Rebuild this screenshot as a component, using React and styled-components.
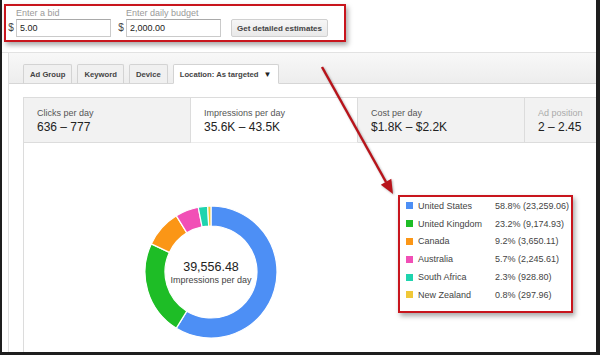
import React from 'react'
import styled, { createGlobalStyle } from 'styled-components'

const GlobalStyle = createGlobalStyle`
	html, body {
		margin: 0;
		padding: 0;
		background: #fff;
	}
	body {
		font-family: "Liberation Sans", Arial, sans-serif;
	}
	* {
		box-sizing: border-box;
	}
`

const slices = [
	{ name: 'United States', pct: 58.8, value: '23,259.06', color: '#4d8ff5' },
	{ name: 'United Kingdom', pct: 23.2, value: '9,174.93', color: '#1ebd26' },
	{ name: 'Canada', pct: 9.2, value: '3,650.11', color: '#fb9616' },
	{ name: 'Australia', pct: 5.7, value: '2,245.61', color: '#f14fb6' },
	{ name: 'South Africa', pct: 2.3, value: '928.80', color: '#1fd4ae' },
	{ name: 'New Zealand', pct: 0.8, value: '297.96', color: '#f0c838' },
]

const metrics = [
	{ label: 'Clicks per day', value: '636 – 777' },
	{ label: 'Impressions per day', value: '35.6K – 43.5K', active: true },
	{ label: 'Cost per day', value: '$1.8K – $2.2K' },
	{ label: 'Ad position', value: '2 – 2.45', muted: true },
]

const tabs = ['Ad Group', 'Keyword', 'Device']

// ring segment between two angles (degrees, 0 = top, clockwise)
const arc = (cx, cy, r1, r2, a0, a1) => {
	const pt = (r, a) => {
		const rad = ((a - 90) * Math.PI) / 180
		return [cx + r * Math.cos(rad), cy + r * Math.sin(rad)]
	}
	const large = a1 - a0 > 180 ? 1 : 0
	const [x0, y0] = pt(r2, a0)
	const [x1, y1] = pt(r2, a1)
	const [x2, y2] = pt(r1, a1)
	const [x3, y3] = pt(r1, a0)
	return `M${x0} ${y0} A${r2} ${r2} 0 ${large} 1 ${x1} ${y1} L${x2} ${y2} A${r1} ${r1} 0 ${large} 0 ${x3} ${y3} Z`
}

const Donut = () => {
	let start = 0
	return (
		<DonutSvg width='134' height='134' viewBox='0 0 134 134'>
			{slices.map((s) => {
				const end = start + (s.pct / 100) * 360
				const d = arc(67, 67, 46, 66, start, end)
				start = end
				return <path key={s.name} d={d} fill={s.color} stroke='#fff' strokeWidth='1.2' />
			})}
			<text x='67' y='63' textAnchor='middle' dominantBaseline='middle' fontSize='12.5' fill='#222'>
				39,556.48
			</text>
			<text x='67' y='76' textAnchor='middle' dominantBaseline='middle' fontSize='9' fill='#444'>
				Impressions per day
			</text>
		</DonutSvg>
	)
}

const App = () => {
	return (
		<>
			<GlobalStyle />
			<Frame>
				<TopBar>
					<Callout>
						<Group>
							<Dollar>$</Dollar>
							<Field>
								<FieldLabel>Enter a bid</FieldLabel>
								<Input readOnly value='5.00' />
							</Field>
						</Group>
						<Group $gap>
							<Dollar>$</Dollar>
							<Field>
								<FieldLabel>Enter daily budget</FieldLabel>
								<Input readOnly value='2,000.00' />
							</Field>
						</Group>
						<EstimateButton>Get detailed estimates</EstimateButton>
					</Callout>
				</TopBar>
				<Panel>
					<TabStrip>
						{tabs.map((t) => (
							<Tab key={t}>{t}</Tab>
						))}
						<Tab $active>
							Location: As targeted <Caret>▼</Caret>
						</Tab>
					</TabStrip>
					<Inner>
						<Cards>
							{metrics.map((m) => (
								<Card key={m.label} $active={m.active}>
									<CardLabel $muted={m.muted}>{m.label}</CardLabel>
									<CardValue>{m.value}</CardValue>
								</Card>
							))}
						</Cards>
						<ChartRow>
							<Donut />
							<Legend>
								{slices.map((s) => (
									<LegendRow key={s.name}>
										<Swatch $color={s.color} />
										<LegendName>{s.name}</LegendName>
										<span>
											{s.pct.toFixed(1)}% ({s.value})
										</span>
									</LegendRow>
								))}
							</Legend>
						</ChartRow>
					</Inner>
				</Panel>
				<Arrow width='600' height='355' viewBox='0 0 600 355'>
					<line x1='322' y1='67' x2='386' y2='182' stroke='#b8141b' strokeWidth='2.5' />
					<polygon points='393,194 380.8,184.7 391.3,178.8' fill='#b8141b' />
				</Arrow>
			</Frame>
		</>
	)
}

export default App

const Frame = styled.div`
	position: relative;
	width: 600px;
	height: 355px;
	display: flex;
	flex-direction: column;
	overflow: hidden;
	background: #fff;
	border-left: 2px solid #1e1e1e;
	border-right: 4px solid #1e1e1e;
	border-bottom: 3px solid #1e1e1e;
`

const TopBar = styled.div`
	height: 53px;
	flex-shrink: 0;
	border-bottom: 1px solid #e2e2e2;
`

const Callout = styled.div`
	margin: 4px 0 0 2px;
	width: 342px;
	height: 38px;
	display: flex;
	align-items: flex-end;
	padding-bottom: 3px;
	border: 2px solid #c8151d;
	box-shadow: 2px 3px 5px rgba(0, 0, 0, 0.35);
`

const Group = styled.div`
	display: flex;
	align-items: flex-end;
	margin-left: ${(p) => (p.$gap ? '5px' : '0')};
`

const Dollar = styled.span`
	width: 10px;
	text-align: center;
	line-height: 18px;
	font-size: 10px;
	color: #444;
`

const Field = styled.div`
	display: flex;
	flex-direction: column;
`

const FieldLabel = styled.label`
	font-size: 9px;
	line-height: 11px;
	color: #9a9a9a;
`

const Input = styled.input`
	width: 95px;
	height: 18px;
	padding: 0 3px;
	border: 1px solid #cacaca;
	border-top-color: #a9a9a9;
	font-family: inherit;
	font-size: 9px;
	color: #222;
	outline: none;
`

const EstimateButton = styled.button`
	margin-left: 10px;
	width: 97px;
	height: 18px;
	padding: 0;
	border: 1px solid #d0d0d0;
	border-radius: 2px;
	background: linear-gradient(#f6f6f6, #e9e9e9);
	font-family: inherit;
	font-size: 8px;
	font-weight: bold;
	color: #444;
`

const Panel = styled.div`
	flex: 1;
	display: flex;
	flex-direction: column;
	margin-left: 6px;
	border-left: 1px solid #e0e0e0;
`

const TabStrip = styled.div`
	height: 31px;
	flex-shrink: 0;
	display: flex;
	align-items: flex-end;
	padding-left: 14px;
	background: linear-gradient(#f8f8f8, #ededed);
	border-bottom: 1px solid #d6d6d6;
`

const Tab = styled.div`
	height: 20px;
	margin: 0 5px -1px 0;
	padding: 0 6px;
	display: flex;
	align-items: center;
	border: 1px solid #d3d3d3;
	border-bottom-color: ${(p) => (p.$active ? '#fff' : '#d6d6d6')};
	border-radius: 2px 2px 0 0;
	background: ${(p) => (p.$active ? '#fff' : '#f0f0f0')};
	font-size: 7.7px;
	font-weight: bold;
	color: #444;
	white-space: pre;
`

const Caret = styled.span`
	margin-left: 3px;
	font-size: 8px;
	color: #222;
`

const Inner = styled.div`
	flex: 1;
	display: flex;
	flex-direction: column;
	margin: 13px 0 0 14px;
	border-left: 1px solid #dcdcdc;
`

const Cards = styled.div`
	display: flex;
	height: 46px;
	flex-shrink: 0;
`

const Card = styled.div`
	width: 167px;
	flex-shrink: 0;
	padding: 10px 0 0 13px;
	border-top: 1px solid #dcdcdc;
	border-bottom: 1px solid ${(p) => (p.$active ? '#ececec' : '#dcdcdc')};
	border-right: 1px solid #dcdcdc;
	background: ${(p) => (p.$active ? '#fff' : '#f2f2f2')};

	&:last-child {
		flex: 1;
		border-right: none;
	}
`

const CardLabel = styled.div`
	font-size: 9px;
	line-height: 11px;
	color: ${(p) => (p.$muted ? '#aaa' : '#555')};
`

const CardValue = styled.div`
	margin-top: 1px;
	font-size: 12px;
	line-height: 15px;
	color: #222;
`

const ChartRow = styled.div`
	flex: 1;
	display: flex;
	align-items: flex-start;
	padding: 52px 0 0 120px;
`

const DonutSvg = styled.svg`
	margin-top: 10px;
	flex-shrink: 0;
	font-family: "Liberation Sans", Arial, sans-serif;
`

const Legend = styled.div`
	margin-left: 120px;
	width: 175px;
	height: 118px;
	padding: 0 0 0 6px;
	border: 2px solid #c8151d;
	box-shadow: 2px 3px 5px rgba(0, 0, 0, 0.35);
	background: #fff;
`

const LegendRow = styled.div`
	display: flex;
	align-items: center;
	height: 17.8px;
	font-size: 9px;
	color: #444;
`

const Swatch = styled.span`
	width: 7px;
	height: 7px;
	margin-right: 5px;
	background: ${(p) => p.$color};
`

const LegendName = styled.span`
	width: 77px;
`

const Arrow = styled.svg`
	position: absolute;
	top: 0;
	left: -2px;
	pointer-events: none;
	filter: drop-shadow(1px 1px 1px rgba(0, 0, 0, 0.3));
`
